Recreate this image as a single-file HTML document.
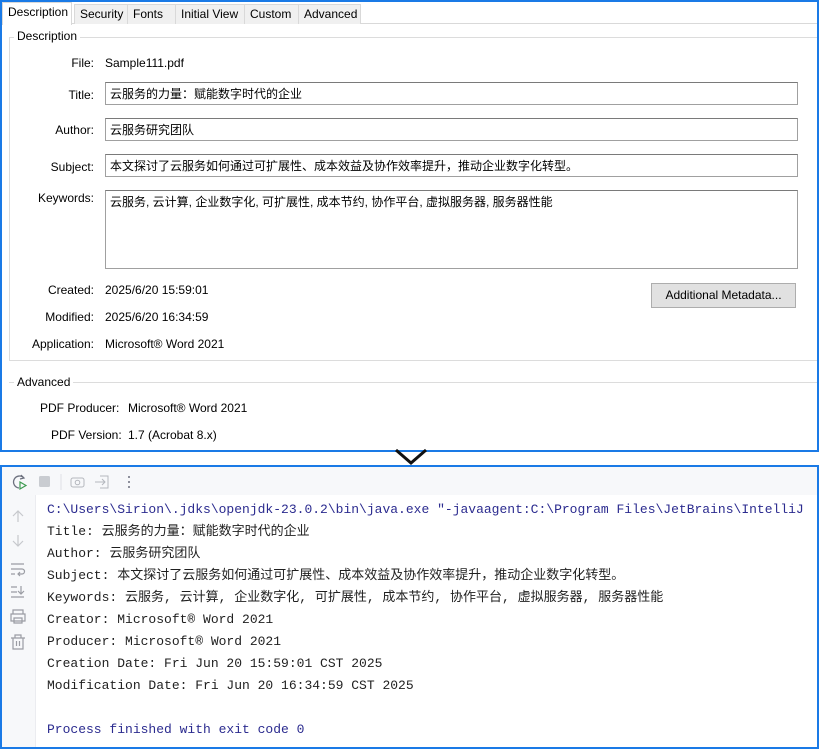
<!DOCTYPE html>
<html><head><meta charset="utf-8"><style>
*{margin:0;padding:0;box-sizing:border-box}
body{width:819px;height:749px;background:#fff;position:relative;overflow:hidden;font-family:"Segoe UI","Liberation Sans","Noto Sans CJK SC",sans-serif;font-size:12px;color:#000}
.a{position:absolute;white-space:nowrap}
.top{position:absolute;left:0;top:0;width:819px;height:452px;border:2px solid #1a7ae6;background:#fff}
.tabs{position:absolute;left:0;top:0;height:22px;width:815px;border-bottom:1px solid #d9d9d9}
.tab{position:absolute;top:2px;height:20px;background:#f0f0f0;border:1px solid #d9d9d9;border-bottom:none;font-size:12px;padding:2px 5px 0}
.lbl{position:absolute;text-align:right;width:90px;font-size:12px}
.box{position:absolute;left:103px;width:693px;height:23px;border:1px solid #a0a0a0;border-top-color:#7a7a7a;padding:3px 4px;font-size:12px;line-height:16px;background:#fff}
.bot{position:absolute;left:0;top:465px;width:819px;height:284px;border:2px solid #1a7ae6;background:#fff}
.mono{font-family:"Liberation Mono","Noto Sans CJK SC",monospace;font-size:13px;line-height:16px;height:16px;color:#1f1f1f;position:absolute;left:45px;white-space:nowrap}
</style></head><body>
<div class="top">
 <div class="tabs"></div>
 <div class="tab" style="left:0;top:0;height:23px;background:#fff;width:70px">Description</div>
 <div class="tab" style="left:72px;width:54px">Security</div>
 <div class="tab" style="left:125px;width:49px">Fonts</div>
 <div class="tab" style="left:173px;width:70px">Initial View</div>
 <div class="tab" style="left:242px;width:55px">Custom</div>
 <div class="tab" style="left:296px;width:63px">Advanced</div>
 <div class="a" style="left:7px;top:35px;width:808px;height:324px;border:1px solid #dcdcdc;border-right:none"></div>
 <div class="a" style="left:12px;top:27px;background:#fff;padding:0 3px">Description</div>
 <div class="lbl" style="left:2px;top:54px">File:</div><div class="a" style="left:103px;top:54px">Sample111.pdf</div>
 <div class="lbl" style="left:2px;top:86px">Title:</div><div class="box" style="top:80px">云服务的力量：赋能数字时代的企业</div>
 <div class="lbl" style="left:2px;top:121px">Author:</div><div class="box" style="top:116px">云服务研究团队</div>
 <div class="lbl" style="left:2px;top:158px">Subject:</div><div class="box" style="top:152px">本文探讨了云服务如何通过可扩展性、成本效益及协作效率提升，推动企业数字化转型。</div>
 <div class="lbl" style="left:2px;top:189px">Keywords:</div><div class="box" style="top:188px;height:79px">云服务, 云计算, 企业数字化, 可扩展性, 成本节约, 协作平台, 虚拟服务器, 服务器性能</div>
 <div class="lbl" style="left:2px;top:281px">Created:</div><div class="a" style="left:103px;top:281px">2025/6/20 15:59:01</div>
 <div class="lbl" style="left:2px;top:308px">Modified:</div><div class="a" style="left:103px;top:308px">2025/6/20 16:34:59</div>
 <div class="lbl" style="left:2px;top:335px">Application:</div><div class="a" style="left:103px;top:335px">Microsoft® Word 2021</div>
 <div class="a" style="left:649px;top:281px;width:145px;height:25px;background:#e1e1e1;border:1px solid #adadad;text-align:center;padding-top:4px">Additional Metadata...</div>
 <div class="a" style="left:7px;top:380px;width:808px;height:1px;background:#dcdcdc"></div>
 <div class="a" style="left:12px;top:373px;background:#fff;padding:0 3px">Advanced</div>
 <div class="a" style="left:38px;top:399px">PDF Producer:</div><div class="a" style="left:126px;top:399px">Microsoft® Word 2021</div>
 <div class="a" style="left:49px;top:426px">PDF Version:</div><div class="a" style="left:126px;top:426px">1.7 (Acrobat 8.x)</div>
</div>
<svg class="a" style="left:394px;top:448px" width="34" height="18"><path d="M2 2 L17 15 L32 2" stroke="#111" stroke-width="3" fill="none"/></svg>
<div class="bot">
 <div class="a" style="left:0;top:0;width:815px;height:28px;background:#f7f8fa"></div>
 <div class="a" style="left:0;top:28px;width:34px;height:252px;background:#f7f8fa;border-right:1px solid #ebecf0"></div>
 <svg class="a" style="left:8px;top:6px" width="120" height="18">
  <path d="M14 5 A6 6 0 1 0 9 15" stroke="#6c707e" stroke-width="1.3" fill="none"/><path d="M10 9 L16 12.5 L10 16Z" stroke="#3d9a50" stroke-width="1.2" fill="none"/><path d="M11 2 L14 5 L10 6" stroke="#6c707e" stroke-width="1.2" fill="none"/>
  <rect x="29" y="3" width="11" height="11" rx="1.5" fill="#c9ccd1"/>
  <line x1="51" y1="1" x2="51" y2="17" stroke="#dfe1e5"/>
  <rect x="61" y="5" width="13" height="9" rx="2" stroke="#b4b7bd" fill="none"/><circle cx="67.5" cy="9.5" r="2.3" stroke="#b4b7bd" fill="none"/>
  <path d="M90 3 H98 V15 H90 M85 9 H95 M92 6 L95 9 L92 12" stroke="#b4b7bd" fill="none"/>
  <circle cx="119" cy="4" r="1" fill="#6c707e"/><circle cx="119" cy="9" r="1" fill="#6c707e"/><circle cx="119" cy="14" r="1" fill="#6c707e"/>
 </svg>
 <svg class="a" style="left:6px;top:40px" width="20" height="150" fill="none" stroke="#9a9ca3" stroke-width="1.2">
  <path d="M10 4 V15 M5 9 L10 4 L15 9" stroke="#c6c8cc"/>
  <path d="M10 28 V39 M5 34 L10 39 L15 34" stroke="#c6c8cc"/>
  <path d="M3 57 H16 M3 62 H14 A2.5 2.5 0 0 1 14 67 H10 M12 65 L10 67 L12 69 M3 67 H7"/>
  <path d="M3 80 H9 M3 85 H9 M3 90 H16 M13 79 V87 M10 84 L13 87 L16 84"/>
  <path d="M5 107 V103 H15 V107 M3 107 H17 V114 H3Z M6 111 H14 V116 H6Z"/>
  <path d="M3 131 H17 M7 131 V128 H13 V131 M5 131 V142 H15 V131 M8.5 134 V139 M11.5 134 V139"/>
 </svg>
 <div class="mono" style="top:35px;color:#2b2b8f">C:\Users\Sirion\.jdks\openjdk-23.0.2\bin\java.exe "-javaagent:C:\Program Files\JetBrains\IntelliJ</div>
 <div class="mono" style="top:57px">Title: 云服务的力量：赋能数字时代的企业</div>
 <div class="mono" style="top:79px">Author: 云服务研究团队</div>
 <div class="mono" style="top:101px">Subject: 本文探讨了云服务如何通过可扩展性、成本效益及协作效率提升，推动企业数字化转型。</div>
 <div class="mono" style="top:123px">Keywords: 云服务, 云计算, 企业数字化, 可扩展性, 成本节约, 协作平台, 虚拟服务器, 服务器性能</div>
 <div class="mono" style="top:145px">Creator: Microsoft® Word 2021</div>
 <div class="mono" style="top:167px">Producer: Microsoft® Word 2021</div>
 <div class="mono" style="top:189px">Creation Date: Fri Jun 20 15:59:01 CST 2025</div>
 <div class="mono" style="top:211px">Modification Date: Fri Jun 20 16:34:59 CST 2025</div>
 <div class="mono" style="top:255px;color:#2b2b8f">Process finished with exit code 0</div>
</div>
</body></html>
